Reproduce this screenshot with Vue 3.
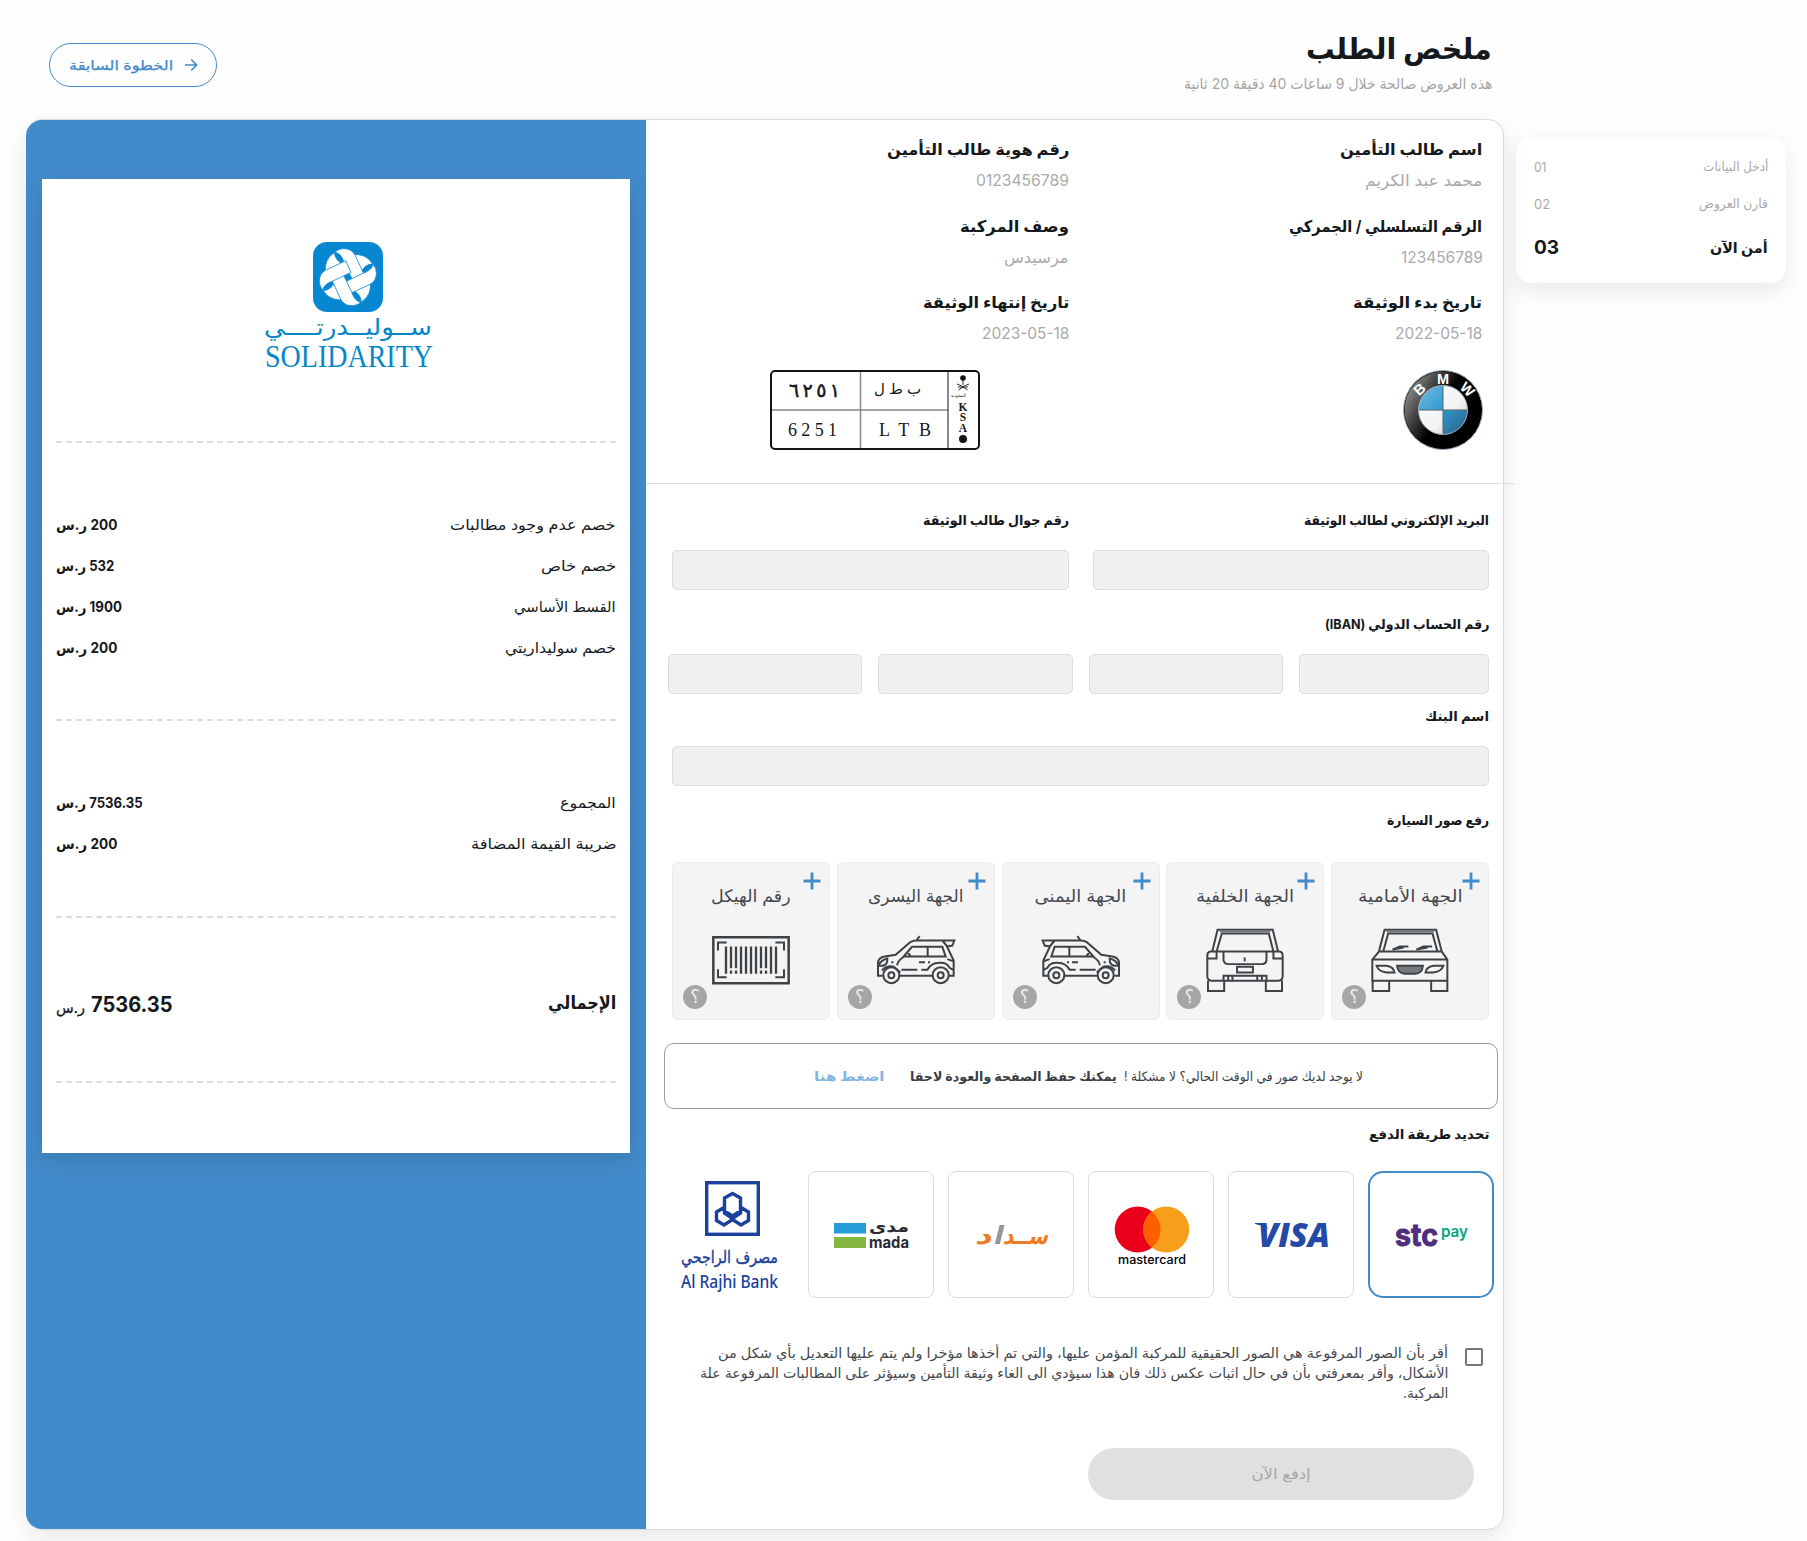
<script setup>
// Condenses or widens a line of text to the given width in pixels.
const vFit = {
  mounted(el, { value }) {
    const natural = el.offsetWidth
    if (natural) el.style.transform = `scaleX(${value / natural})`
  },
}

const steps = [
  { no: '01', text: 'أدخل البيانات', w: 65, nw: 13 },
  { no: '02', text: 'قارن العروض', w: 69, nw: 16 },
  { no: '03', text: 'أمن الآن', w: 58, nw: 25, active: true },
]

const info = [
  { label: 'اسم طالب التأمين', value: 'محمد عبد الكريم', lw: 142, vw: 117 },
  { label: 'رقم هوية طالب التأمين', value: '0123456789', lw: 182, vw: 93 },
  { label: 'الرقم التسلسلي / الجمركي', value: '123456789', lw: 193, vw: 82 },
  { label: 'وصف المركبة', value: 'مرسيدس', lw: 109, vw: 65 },
  { label: 'تاريخ بدء الوثيقة', value: '2022-05-18', lw: 129, vw: 87 },
  { label: 'تاريخ إنتهاء الوثيقة', value: '2023-05-18', lw: 146, vw: 87 },
]

const discounts = [
  { label: 'خصم عدم وجود مطالبات', value: '200', lw: 166, vw: 61 },
  { label: 'خصم خاص', value: '532', lw: 75, vw: 58 },
  { label: 'القسط الأساسي', value: '1900', lw: 102, vw: 66 },
  { label: 'خصم سوليداريتي', value: '200', lw: 111, vw: 61 },
]

const totals = [
  { label: 'المجموع', value: '7536.35', lw: 56, vw: 87 },
  { label: 'ضريبة القيمة المضافة', value: '200', lw: 146, vw: 61 },
]

const photos = [
  { kind: 'front', text: 'الجهة الأمامية', w: 105 },
  { kind: 'rear', text: 'الجهة الخلفية', w: 98 },
  { kind: 'right', text: 'الجهة اليمنى', w: 92 },
  { kind: 'left', text: 'الجهة اليسرى', w: 96 },
  { kind: 'code', text: 'رقم الهيكل', w: 80 },
]
</script>

<template>
  <div class="page" dir="rtl">
    <aside class="steps">
      <div v-for="s in steps" :key="s.no" class="step" :class="{ active: s.active }">
        <span v-fit="s.w" class="t">{{ s.text }}</span>
        <span v-fit="s.nw" class="t l num">{{ s.no }}</span>
      </div>
    </aside>

    <main class="main">
      <header class="head">
        <div class="titles">
          <h1><span v-fit="186" class="t">ملخص الطلب</span></h1>
          <p><span v-fit="308" class="t">هذه العروض صالحة خلال 9 ساعات 40 دقيقة 20 ثانية</span></p>
        </div>
        <button class="back">
          <svg width="14" height="14" viewBox="0 0 14 14"><path d="M1 7H12.5M7.2 1.5 12.7 7l-5.5 5.5" /></svg>
          <span class="back-text"><span v-fit="104" class="t l">الخطوة السابقة</span></span>
        </button>
      </header>

      <div class="card">
        <section class="pane">
          <div class="info">
            <div class="info-grid">
              <div v-for="i in info" :key="i.label" class="cell">
                <div class="info-label"><span v-fit="i.lw" class="t">{{ i.label }}</span></div>
                <div class="info-value"><span v-fit="i.vw" class="t">{{ i.value }}</span></div>
              </div>
            </div>
            <div class="emblems">
              <svg class="bmw" width="80" height="80" viewBox="0 0 80 80">
                <defs>
                  <linearGradient id="ring" x1="0" y1=".2" x2=".7" y2=".6">
                    <stop offset="0" stop-color="#999" /><stop offset=".45" stop-color="#333" /><stop offset=".7" stop-color="#000" />
                  </linearGradient>
                  <linearGradient id="blueA" x1="0" y1="0" x2="1" y2="1">
                    <stop offset="0" stop-color="#74bde3" /><stop offset="1" stop-color="#2f98d0" />
                  </linearGradient>
                  <linearGradient id="blueB" x1="0" y1="0" x2="1" y2="1">
                    <stop offset="0" stop-color="#2f98d0" /><stop offset="1" stop-color="#2a5f80" />
                  </linearGradient>
                  <linearGradient id="white" x1="0" y1="0" x2="1" y2="1">
                    <stop offset="0" stop-color="#fff" /><stop offset=".6" stop-color="#f2f2f2" /><stop offset="1" stop-color="#bbb" />
                  </linearGradient>
                </defs>
                <circle cx="40" cy="40" r="39.5" fill="#000" stroke="#9ab" stroke-width="1" />
                <circle cx="40" cy="40" r="38.5" fill="url(#ring)" />
                <circle cx="40" cy="40" r="24.5" fill="url(#white)" />
                <path d="M40 40V15.5A24.5 24.5 0 0 0 15.5 40Z" fill="url(#blueA)" />
                <path d="M40 40V64.5A24.5 24.5 0 0 0 64.5 40Z" fill="url(#blueB)" />
                <path d="M40 15.5V64.5M15.5 40H64.5" stroke="#566" stroke-width="1" />
                <circle cx="40" cy="40" r="24.5" fill="none" stroke="#9ab" stroke-width="1" />
                <g fill="#fff" font-family="Liberation Sans" font-weight="700" font-size="14.5" text-anchor="middle">
                  <text x="40" y="13.5">M</text>
                  <text transform="translate(20 23) rotate(-42)">B</text>
                  <text transform="translate(61 23) rotate(44)">W</text>
                </g>
              </svg>
              <svg class="plate" width="210" height="80" viewBox="0 0 210 80">
                <rect x="1" y="1" width="208" height="78" rx="4" fill="#fff" stroke="#111418" stroke-width="2" />
                <path d="M90.5 2V78M2 40H178" stroke="#888" stroke-width="1.5" />
                <path d="M178 2V78" stroke="#111418" stroke-width="1" />
                <text x="19" y="27" font-size="19" font-family="DejaVu Sans" textLength="51" stroke="#15181c" stroke-width=".5">٦٢٥١</text>
                <g font-family="DejaVu Sans" font-size="15">
                  <text x="104" y="24">ل</text>
                  <text x="119" y="24">ط</text>
                  <text x="137" y="24">ب</text>
                </g>
                <g font-family="Liberation Serif">
                  <text x="18" y="65.5" font-size="18" textLength="49">6251</text>
                  <text x="109" y="65.5" font-size="18" textLength="52">LTB</text>
                  <g font-size="11.5" font-weight="700" text-anchor="middle">
                    <text x="193" y="41">K</text><text x="193" y="51">S</text><text x="193" y="61.5">A</text>
                  </g>
                </g>
                <circle cx="193" cy="69" r="4" fill="#111418" />
                <circle cx="193" cy="8" r="2.8" fill="#111418" />
                <path d="M193 8V15M187 14Q191 15 197.5 20M199 14Q195 15 188.5 20M188 17H198" stroke="#111418" stroke-width=".9" fill="none" />
                <text x="181" y="27" font-family="DejaVu Sans" font-size="4.5" textLength="15" lengthAdjust="spacingAndGlyphs">السعودية</text>
              </svg>
            </div>
          </div>
          <div class="rule"></div>

          <div class="form">
            <div class="two">
              <div>
                <div class="label"><span v-fit="185" class="t">البريد الإلكتروني لطالب الوثيقة</span></div>
                <div class="input"></div>
              </div>
              <div>
                <div class="label"><span v-fit="146" class="t">رقم جوال طالب الوثيقة</span></div>
                <div class="input"></div>
              </div>
            </div>

            <div class="label mt24"><span v-fit="164" class="t">رقم الحساب الدولي (IBAN)</span></div>
            <div class="four">
              <div class="input first"></div>
              <div class="input"></div>
              <div class="input"></div>
              <div class="input"></div>
            </div>

            <div class="label mt12"><span v-fit="64" class="t">اسم البنك</span></div>
            <div class="input"></div>

            <div class="label mt24"><span v-fit="102" class="t">رفع صور السيارة</span></div>
            <div class="photos">
              <div v-for="p in photos" :key="p.kind" class="photo">
                <svg class="plus" width="18" height="18" viewBox="0 0 18 18"><path d="M9 .5V17.5M.5 9H17.5" /></svg>
                <div class="photo-text"><span v-fit="p.w" class="t c">{{ p.text }}</span></div>
                <svg v-if="p.kind === 'front'" class="car" width="80" height="66" viewBox="900 260 242 199">
                  <path d="M927 334 944 268H1100L1117 334M940 334 955 279H1089L1104 334M927 334 907 358V422H1134V358L1117 334ZM907 358H1134M920 377H950Q972 381 974 397H950Q926 395 920 377ZM1122 377H1092Q1070 381 1068 397H1092Q1116 395 1122 377ZM908 422H958V453H908ZM1085 422H1134V453H1085Z" />
                  <path d="M982 377H1060Q1058 401 1036 401H1006Q984 400 982 377Z" fill="#777b80" />
                  <path d="M968 328 990 319H1016M968 328 1002 322M1040 328 1062 319H1088M1040 328 1074 322" />
                  <path d="M950 273H1094" stroke="#777b80" />
                </svg>
                <svg v-else-if="p.kind === 'rear'" class="car" width="80" height="66" viewBox="405 260 242 199">
                  <path d="M427 334 443 268H610L626 334M440 334 456 279H598L612 334M422 334H630Q640 335 640 346V410Q639 422 628 422H591V407H461V422H424Q413 421 412 410V346Q412 335 422 334ZM461 334V360Q463 372 475 372H578Q590 371 591 360V334M412 355H440V334M640 355H612V334M502 380H550V397H502ZM461 422H591M475 407V422M488 407V422M563 407V422M577 407V422M414 422V453H463V422M589 422V453H638V422M525 352V363" />
                  <path d="M450 273H603" stroke="#777b80" />
                </svg>
                <svg v-else-if="p.kind === 'code'" class="car" width="80" height="50" viewBox="185 285 240 151">
                  <path d="M192 292H418V430H192Z" stroke-width="7.5" />
                  <path d="M206 332V308H232M378 308H404V332M206 388V412H232M378 412H404V388" />
                  <path d="M230 320V402M245 320V385M260 320V385M275 320V402M290 320V402M305 320V402M320 320V402M335 320V385M350 320V385M365 320V402M380 320V402M245 392V402M260 392V402M335 392V402M350 392V402" stroke-width="7" />
                </svg>
                <svg v-else class="car" :class="{ flip: p.kind === 'right' }" width="80" height="50" viewBox="679 285 240 151">
                  <path d="M699 408H685V368Q687 353 705 350L738 345 776 312Q785 302 800 302H914L908 317 892 320 912 362V408H898M800 302 810 289M878 302 893 320M762 350 787 321H878L888 350ZM834 321V350M772 334 782 348M748 408H848M755 390H803M815 390H833Q845 369 868 369 892 367 900 384L911 390M808 367H826M835 367H841M687 378Q692 361 713 356 714 374 700 378ZM725 367H731M742 376Q746 360 764 350M697 392Q711 375 733 381L752 398M893 358 910 364" />
                  <circle cx="725" cy="406" r="24" /><circle cx="725" cy="406" r="9" />
                  <circle cx="873" cy="406" r="24" /><circle cx="873" cy="406" r="9" />
                </svg>
                <span class="help">؟</span>
              </div>
            </div>

            <div class="notice">
              <span class="n1"><span v-fit="239" class="t">لا يوجد لديك صور في الوقت الحالي؟ لا مشكلة !</span></span>
              <span class="n2"><span v-fit="207" class="t">يمكنك حفظ الصفحة والعودة لاحقا</span></span>
              <span class="n3"><span v-fit="71" class="t">اضغط هنا</span></span>
            </div>

            <div class="label mt15"><span v-fit="121" class="t">تحديد طريقة الدفع</span></div>
            <div class="pays">
              <div class="pay on">
                <svg viewBox="0 0 126 126">
                  <text x="27" y="75" font-family="Inter" font-weight="700" font-size="31" fill="#4f2d7f" stroke="#4f2d7f" stroke-width=".9" textLength="43" lengthAdjust="spacingAndGlyphs">stc</text>
                  <text x="73" y="66" font-family="Inter" font-weight="600" font-size="16" fill="#00a77b" textLength="27" lengthAdjust="spacingAndGlyphs">pay</text>
                </svg>
              </div>
              <div class="pay">
                <svg viewBox="0 0 126 126">
                  <text x="30" y="76" font-family="Open Sans" font-weight="800" font-style="italic" font-size="33" fill="#254aa5" textLength="72" lengthAdjust="spacingAndGlyphs">VISA</text>
                  <path d="M27 52H37L40 58Q34 54 27 53Z" fill="#254aa5" />
                </svg>
              </div>
              <div class="pay">
                <svg viewBox="0 0 126 126">
                  <circle cx="49.7" cy="58.5" r="23" fill="#eb001b" />
                  <circle cx="78.2" cy="58.5" r="23" fill="#f79e1b" />
                  <path d="M63.950 40.500A23 23 0 0 1 63.950 76.500A23 23 0 0 1 63.950 40.500Z" fill="#ff5f00" />
                  <text x="30" y="93" font-family="Inter" font-weight="500" font-size="12.5" textLength="68" lengthAdjust="spacingAndGlyphs">mastercard</text>
                </svg>
              </div>
              <div class="pay">
                <svg viewBox="0 0 126 126">
                  <g transform="translate(18 0) skewX(-14)" font-family="DejaVu Sans" font-weight="700" font-size="24" fill="#f07a22">
                    <text x="55" y="73" textLength="45" lengthAdjust="spacingAndGlyphs">ســد</text>
                    <text x="27" y="73" textLength="17" lengthAdjust="spacingAndGlyphs">د</text>
                    <path d="M47 54H52V73H47Z" fill="#969696" />
                  </g>
                </svg>
              </div>
              <div class="pay">
                <svg viewBox="0 0 126 126">
                  <path d="M26 52H58V62.5H26Z" fill="#259bd7" /><path d="M26 66H58V77H26Z" fill="#84b740" />
                  <text x="61" y="61" font-family="DejaVu Sans" font-weight="700" font-size="16" fill="#2a2a36" textLength="40" lengthAdjust="spacingAndGlyphs">مدى</text>
                  <text x="61" y="77" font-family="Inter" font-weight="700" font-size="16" fill="#2a2a36" textLength="40" lengthAdjust="spacingAndGlyphs">mada</text>
                </svg>
              </div>
              <div class="pay bare">
                <svg viewBox="0 0 126 126">
                  <g fill="none" stroke="#1b419c" stroke-width="3.4">
                    <rect x="38.7" y="11.7" width="51.6" height="51.6" />
                    <path d="M64.5 22.5 72.5 27V40L64.5 45 56.5 40V27ZM56 36.5 48.5 41V49.5L56 54 64.5 48.5 73 54 80.5 49.500V41L73 36.500M56.500 40V42L64.500 47.500 72.500 42V40" />
                  </g>
                  <text x="13" y="92" font-family="DejaVu Sans" font-size="17" fill="#1b419c" stroke="#1b419c" stroke-width=".4" textLength="97" lengthAdjust="spacingAndGlyphs">مصرف الراجحي</text>
                  <text x="13" y="116.5" font-family="Noto Sans" font-weight="500" font-size="17.5" fill="#1b419c" textLength="97" lengthAdjust="spacingAndGlyphs">Al Rajhi Bank</text>
                </svg>
              </div>
            </div>

            <div class="agree">
              <span class="box"></span>
              <div class="agree-text">
                <div><span v-fit="730" class="t">أقر بأن الصور المرفوعة هي الصور الحقيقية للمركبة المؤمن عليها، والتي تم أخذها مؤخرا ولم يتم عليها التعديل بأي شكل من</span></div>
                <div><span v-fit="748" class="t">الأشكال، وأقر بمعرفتي بأن في حال اثبات عكس ذلك فان هذا سيؤدي الى الغاء وثيقة التأمين وسيؤثر على المطالبات المرفوعة علة</span></div>
                <div><span v-fit="45" class="t">المركبة.</span></div>
              </div>
            </div>

            <button class="submit"><span v-fit="59" class="t c">إدفع الآن</span></button>
          </div>
        </section>

        <section class="side">
          <div class="receipt">
            <div class="part logo">
              <svg width="172" height="136" viewBox="262 242 172 136">
                <rect x="313" y="242" width="70" height="70" rx="14" fill="#0787d2" />
                <g transform="translate(313 242)" fill="#fff" stroke="#0787d2" stroke-width=".8">
                  <g v-for="a in [0, 90, 180, 270]" :key="'b' + a" :transform="`rotate(${a} 34.9 35.2)`">
                    <path d="M21.5 10.5Q10.500 17 12.500 32L30.500 22Q22 19 21.500 10.500Z" />
                  </g>
                  <g v-for="a in [0, 90, 180, 270]" :key="'f' + a" :transform="`rotate(${a} 34.9 35.2)`">
                    <path d="M21.800 10.200Q25.500 6.800 30.500 6.600Q38.500 6.600 42 13L51.300 33 39.700 38.300 31 20Q28 11 21.800 10.200Z" />
                  </g>
                </g>
                <text x="264" y="335" font-family="DejaVu Sans" font-size="23" fill="#0787c8" textLength="168" lengthAdjust="spacingAndGlyphs">ســوليــدرتــــي</text>
                <text x="265" y="366.500" font-family="Liberation Serif" font-size="30.5" fill="#0787c8" textLength="168" lengthAdjust="spacingAndGlyphs">SOLIDARITY</text>
              </svg>
            </div>
            <div class="part p2">
              <div v-for="d in discounts" :key="d.label" class="line">
                <span v-fit="d.lw" class="t">{{ d.label }}</span>
                <b v-fit="d.vw" class="t l">{{ d.value }} ر.س</b>
              </div>
            </div>
            <div class="part p3">
              <div v-for="d in totals" :key="d.label" class="line">
                <span v-fit="d.lw" class="t">{{ d.label }}</span>
                <b v-fit="d.vw" class="t l">{{ d.value }} ر.س</b>
              </div>
            </div>
            <div class="part p4">
              <span class="total-label"><span v-fit="68" class="t">الإجمالي</span></span>
              <div class="total">
                <span class="amount"><b v-fit="82" class="t l">7536.35</b></span>
                <span class="cur"><span v-fit="29" class="t l">ر.س</span></span>
              </div>
            </div>
          </div>
        </section>
      </div>
    </main>
  </div>
</template>

<style>
html, body { margin: 0; background: #fefefe; overflow: hidden; }
</style>

<style scoped>
* { box-sizing: border-box; }
.page {
  width: 1807px; height: 1541px; overflow: hidden; display: flex;
  font-family: Inter, 'DejaVu Sans', sans-serif; color: #15181c; font-size: 14px;
  padding-right: 21px; background: #fefefe;
}
.t { display: inline-block; white-space: nowrap; transform-origin: right center; flex: none; }
.t.l { transform-origin: left center; }
.t.c { transform-origin: center; }
svg { display: block; direction: ltr; overflow: visible; }

.steps {
  width: 270px; height: 146px; margin-top: 137px; flex: none; padding: 18px 18px 0;
  border-radius: 16px; background: #fff; box-shadow: 0 8px 24px rgba(0, 0, 0, .09);
}
.step { display: flex; justify-content: space-between; height: 37px; line-height: 24px; font-size: 12.5px; color: #a9a9a9; }
.num { font-size: 13px; }
.step.active { color: #15181c; font-weight: 700; padding-top: 7px; font-size: 14.5px; }
.step.active .num { font-size: 19px; }

.main { width: 1478px; margin-right: 12px; flex: none; }
.head { height: 119px; display: flex; justify-content: space-between; padding: 29px 12px 0 23px; }
h1 { margin: 0; font-size: 29px; line-height: 40px; font-weight: 700; }
.head p { margin: 5px 0 0; font-size: 15px; line-height: 20px; color: #a5a5a5; }
.back {
  width: 168px; height: 44px; margin-top: 14px; border: 1px solid #428bca; border-radius: 22px;
  background: none; color: #428bca; font: 500 13.5px/20px Inter, 'DejaVu Sans', sans-serif;
  display: flex; align-items: center; justify-content: space-between; padding: 0 18px 0 19px;
}
.back path { fill: none; stroke: #428bca; stroke-width: 1.6; }
.back-text { width: 104px; direction: ltr; display: flex; -webkit-text-stroke: .25px #428bca; }

.card {
  height: 1411px; display: flex; border: 1px solid #dadada; border-radius: 16px; background: #fff;
  box-shadow: 0 8px 24px rgba(0, 0, 0, .09);
}
.pane { width: 857px; flex: none; }
.info { height: 363px; padding: 17px 20.500px 0 26px; }
.info-grid { display: grid; grid-template-columns: 413.500px 1fr; row-gap: 19.5px; }
.cell { height: 57px; }
.info-label { font-size: 16px; font-weight: 700; line-height: 24px; }
.info-value { margin-top: 7px; font-size: 16px; line-height: 24px; color: #aaa; }
.emblems { display: flex; margin-top: 23px; }
.plate { margin-right: 423px; fill: #15181c; }
.rule { height: 1px; width: 869px; margin-right: -12px; background: #dcdcdc; position: relative; }

.form { padding: 26px 14px 0 26px; }
.label { font-size: 13.5px; font-weight: 700; line-height: 20px; margin-bottom: 20px; }
.mt24 { margin-top: 24px; }
.mt12 { margin-top: 12px; }
.mt15 { margin-top: 15px; }
.input { height: 40px; border: 1px solid #dcdcdc; border-radius: 5px; background: #f0f0f0; }
.two { display: grid; grid-template-columns: 396px 397px; column-gap: 24px; }
.four { display: flex; gap: 16px; margin-left: -4px; }
.four .input { flex: 1 1 194px; }
.four .input.first { flex: 0 0 190px; }

.photos { display: flex; justify-content: space-between; margin-top: 32px; }
.photo {
  width: 158px; height: 158px; border: 1px solid #ececec; border-radius: 6px; background: #f4f4f4;
  position: relative; display: flex; flex-direction: column; align-items: center;
}
.plus { position: absolute; top: 9px; right: 8px; }
.plus path { stroke: #428bca; stroke-width: 2.8; }
.photo-text { margin-top: 21px; height: 24px; line-height: 24px; font-size: 17px; color: #44484e; width: 100%; display: flex; justify-content: center; }
.car { margin: auto; height: 66px; margin-top: 19px; fill: none; stroke: #3d4247; stroke-width: 6; }
.car.flip { transform: scaleX(-1); }
.help {
  position: absolute; left: 10px; bottom: 10px; width: 24px; height: 24px; border-radius: 50%;
  background: #a6a6a6; color: #eee; text-align: center; font-size: 18px; line-height: 23px;
}

.notice {
  height: 66px; margin: 23px -9px 0 -8px; border: 1px solid #9c9c9c; border-radius: 10px;
  display: flex; padding: 22px 134px 0 0; line-height: 20px; font-size: 13px; color: #3a3e43;
}
.notice > span { display: block; }
.n1 { width: 246px; }
.n2 { width: 232px; font-weight: 700; }
.n3 { width: 71px; font-weight: 700; color: #83b5e1; }

.pays { display: flex; gap: 14px; margin: 27px -5px 0 -5px; }
.pay { width: 126px; height: 127px; flex: none; border: 1px solid #dcdcdc; border-radius: 8px; background: #fff; }
.pay svg { width: 126px; height: 126px; margin: -1px; }
.pay.on { border: 2px solid #428bca; border-radius: 15px; }
.pay.on svg { margin: -2px; }
.pay.bare { border-color: transparent; }

.agree { display: flex; margin-top: 45px; padding-right: 6px; }
.box { width: 18px; height: 18px; margin-top: 5px; border: 2px solid #777; border-radius: 2px; flex: none; }
.agree-text { margin-right: 16.500px; width: 748px; line-height: 20px; font-size: 14px; color: #44484e; }
.submit {
  display: flex; align-items: center; justify-content: center; width: 386px; height: 52px;
  margin: 45px 15px 0 0; border: 0; border-radius: 26px; background: #e0e0e0; color: #a6a6a6;
  font: 400 14.5px/20px Inter, 'DejaVu Sans', sans-serif;
}

.side { width: 620px; margin-left: -1px; flex: none; background: #428bca; border-radius: 16px 0 0 16px; padding: 59px 16px 0; height: 1409px; }
.receipt { height: 974px; background: #fff; padding: 0 14px; box-shadow: 0 8px 24px rgba(0, 0, 0, .12); }
.part { border-bottom: 2px dashed #dcdcdc; }
.logo { height: 264px; padding: 63px 182px 0 0; }
.p2 { height: 278px; padding-top: 70px; }
.p3 { height: 197px; padding-top: 70px; }
.line { display: flex; justify-content: space-between; height: 41px; line-height: 24px; font-size: 14.5px; }
.p4 { height: 165px; display: flex; justify-content: space-between; padding-top: 72px; line-height: 26px; }
.total-label { font-size: 18px; font-weight: 600; }
.total { display: flex; padding-top: 2px; }
.amount { width: 82px; direction: ltr; font-size: 21px; }
.cur { width: 35px; direction: ltr; font-size: 14.500px; padding-top: 3px; -webkit-text-stroke: .3px #15181c; }
</style>
